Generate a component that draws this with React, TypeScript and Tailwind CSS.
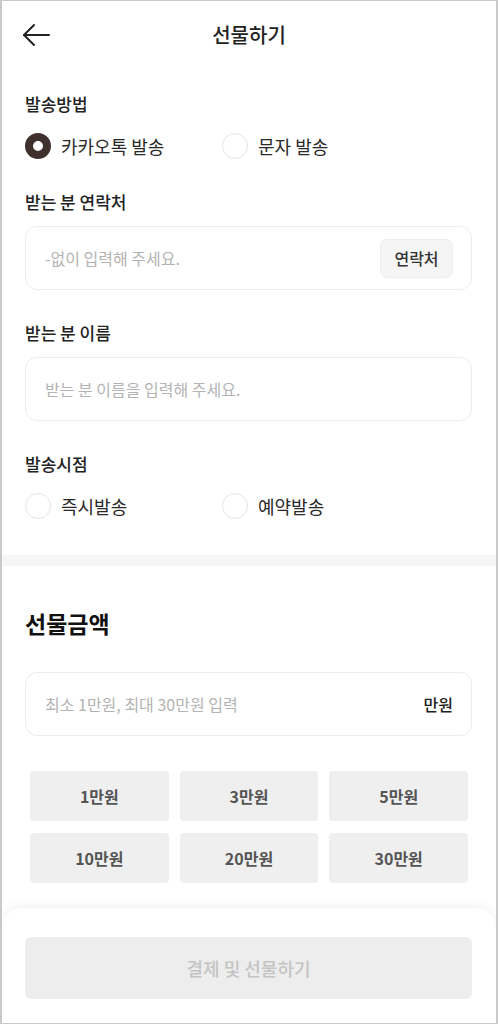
const AMOUNTS = ["1만원", "3만원", "5만원", "10만원", "20만원", "30만원"];

const FONT = "font-['Noto_Sans_CJK_KR','Noto_Sans',sans-serif]";

function Radio({ label, checked = false }: { label: string; checked?: boolean }) {
  return (
    <div className="flex w-[197px] items-center gap-[10px]">
      {checked ? (
        <span className="h-[26px] w-[26px] rounded-full border-[8px] border-[#3d302d] bg-white" />
      ) : (
        <span className="h-[26px] w-[26px] rounded-full border-[1.5px] border-[#e6e6e6] bg-white" />
      )}
      <span className="text-[18px] leading-6 text-[#2a2a2a]">{label}</span>
    </div>
  );
}

function FieldLabel({ children, className = "" }: { children: string; className?: string }) {
  return (
    <p className={`text-[17px] font-medium leading-6 text-[#222] ${className}`}>
      {children}
    </p>
  );
}

export default function App() {
  return (
    <div
      className={`${FONT} flex h-[1024px] w-[498px] flex-col overflow-hidden border-x-2 border-y border-[#c9c9c9] bg-white`}
    >
      <header className="relative flex h-[67px] shrink-0 items-center justify-center">
        <svg
          className="absolute left-[19px] top-[21px]"
          width="30"
          height="26"
          viewBox="0 0 30 26"
          fill="none"
          stroke="#222"
          strokeWidth="2"
          strokeLinecap="round"
          strokeLinejoin="round"
        >
          <path d="M28 13H3" />
          <path d="M13 3L3 13l10 10" />
        </svg>
        <h1 className="text-[20px] font-medium text-[#222]">선물하기</h1>
      </header>

      <section className="pl-[23px] pr-[24px]">
        <FieldLabel className="mt-[24px]">발송방법</FieldLabel>
        <div className="mt-[17px] flex h-[26px] items-center">
          <Radio label="카카오톡 발송" checked />
          <Radio label="문자 발송" />
        </div>

        <FieldLabel className="mt-[31px]">받는 분 연락처</FieldLabel>
        <div className="mt-3 flex h-[64px] items-center justify-between rounded-[12px] border border-[#ececec] pl-[19px] pr-[18px]">
          <span className="text-[16px] text-[#b3b3b3]">-없이 입력해 주세요.</span>
          <button className="h-[39px] w-[73px] rounded-[7px] border border-[#eeeeee] bg-[#f5f5f5] text-[16px] font-medium text-[#333]">
            연락처
          </button>
        </div>

        <FieldLabel className="mt-[31px]">받는 분 이름</FieldLabel>
        <div className="mt-3 flex h-[64px] items-center rounded-[12px] border border-[#ececec] pl-[19px]">
          <span className="text-[16px] text-[#b3b3b3]">받는 분 이름을 입력해 주세요.</span>
        </div>

        <FieldLabel className="mt-[31px]">발송시점</FieldLabel>
        <div className="mt-[17px] flex h-[26px] items-center">
          <Radio label="즉시발송" />
          <Radio label="예약발송" />
        </div>
      </section>

      <div className="mt-[36px] h-[11px] shrink-0 bg-[#f6f6f6]" />

      <section className="pl-[23px] pr-[24px]">
        <h2 className="mt-[42px] text-[23px] font-bold leading-[30px] text-[#111]">선물금액</h2>
        <div className="mt-[34px] flex h-[64px] items-center justify-between rounded-[12px] border border-[#ececec] pl-[19px] pr-[18px]">
          <span className="text-[16px] text-[#b3b3b3]">최소 1만원, 최대 30만원 입력</span>
          <span className="text-[16px] font-medium text-[#222]">만원</span>
        </div>
        <div className="ml-[5px] mr-[4px] mt-[35px] grid grid-cols-3 gap-x-[11px] gap-y-[12px]">
          {AMOUNTS.map((amount) => (
            <button
              key={amount}
              className="h-[50px] rounded-[4px] bg-[#efefef] text-[16px] font-bold text-[#555]"
            >
              {amount}
            </button>
          ))}
        </div>
      </section>

      <footer className="mt-auto rounded-t-[20px] bg-white pb-[24px] pl-[23px] pr-[24px] pt-[29px] shadow-[0_-3px_10px_rgba(0,0,0,0.05)]">
        <button className="h-[62px] w-full rounded-[6px] bg-[#ededed] text-[18px] font-medium text-[#c4c4c4]">
          결제 및 선물하기
        </button>
      </footer>
    </div>
  );
}
